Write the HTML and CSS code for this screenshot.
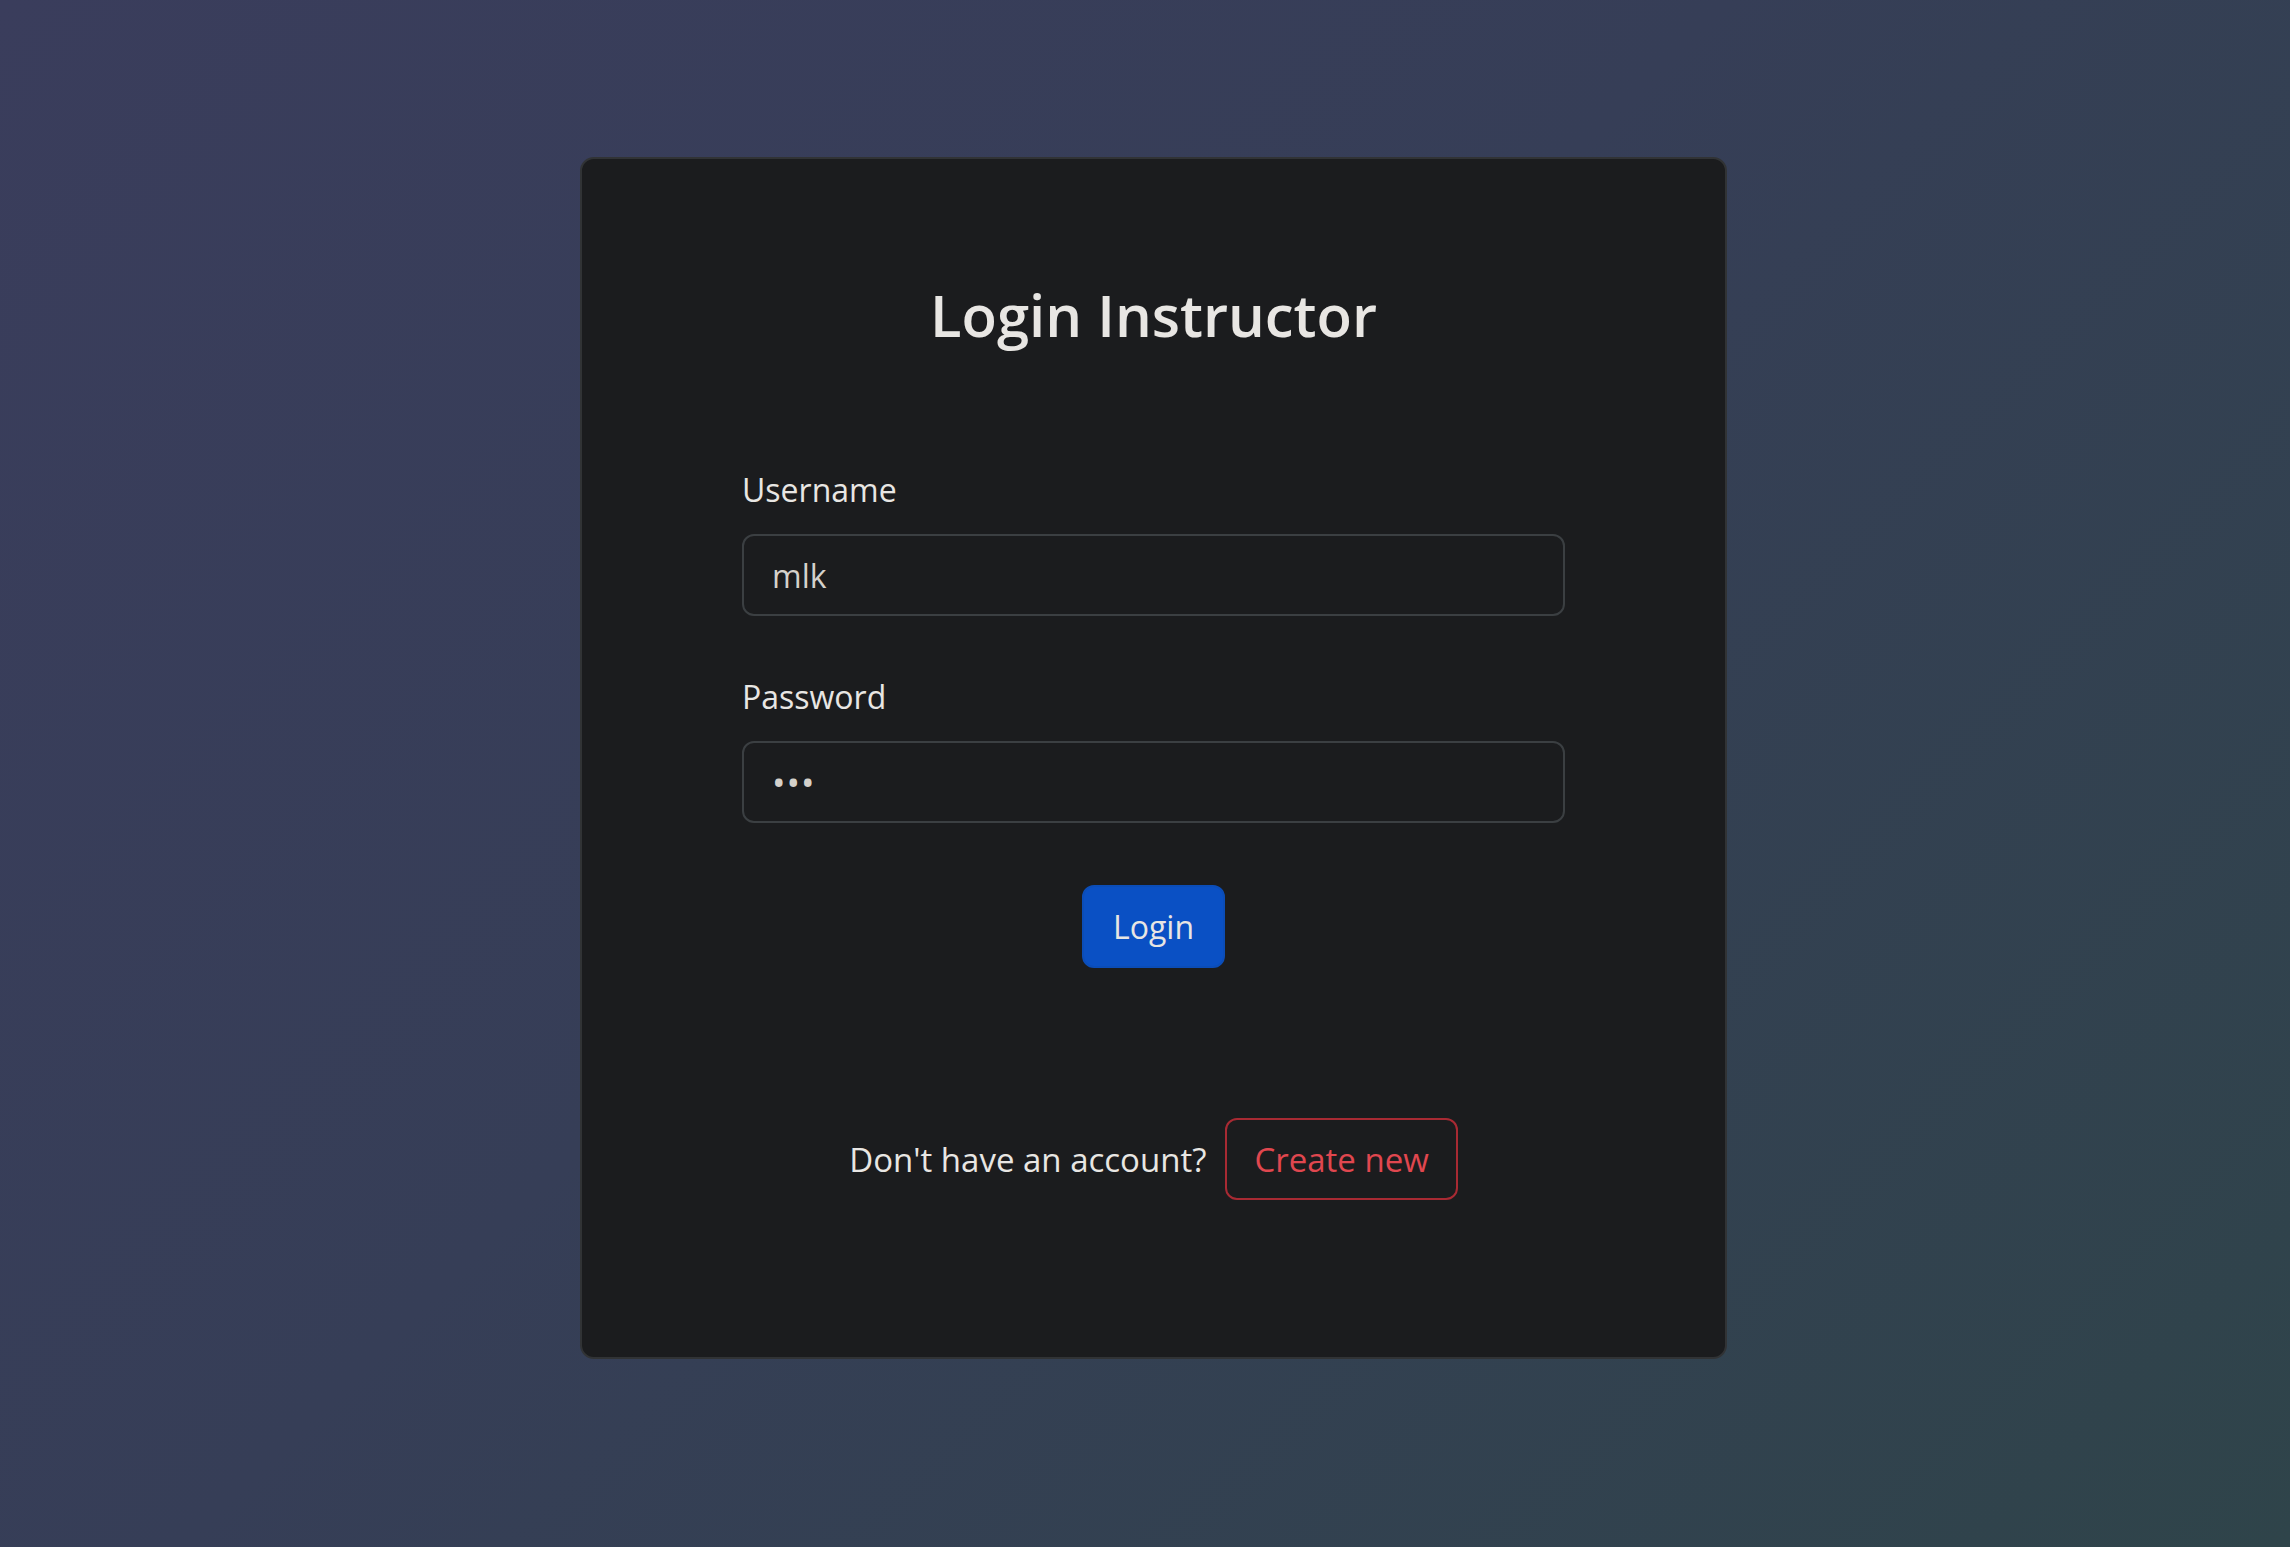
FILE: index.html
```html
<!DOCTYPE html>
<html lang="en">
<head>
<meta charset="utf-8">
<title>Login Instructor</title>
<link rel="stylesheet" href="styles.css">
</head>
<body>
<main class="page">
  <section class="card">
    <h1 class="title">Login Instructor</h1>
    <form class="form">
      <label class="label" for="username">Username</label>
      <input class="field" id="username" type="text" value="mlk">
      <label class="label label-second" for="password">Password</label>
      <input class="field field-password" id="password" type="password" value="abc">
      <div class="actions">
        <button class="btn btn-primary" type="button">Login</button>
      </div>
    </form>
    <div class="signup">
      <span class="signup-text">Don't have an account?</span>
      <button class="btn btn-outline" type="button">Create new</button>
    </div>
  </section>
</main>
</body>
</html>
```

FILE: styles.css
```css
* { box-sizing: border-box; }
html, body { margin: 0; padding: 0; }
body {
  width: 2290px;
  height: 1547px;
  overflow: hidden;
  background: linear-gradient(135deg, #3a3d5c 0%, #363e57 45%, #2f444a 100%);
  font-family: "Open Sans", "Noto Sans", sans-serif;
  color: #e8e6e3;
}
.page {
  padding-top: 157px;
  padding-left: 580px;
}
.card {
  width: 1147px;
  height: 1202px;
  background: #1b1c1e;
  border: 2px solid #313335;
  border-radius: 14px;
  padding: 121px 160px 0;
  display: flex;
  flex-direction: column;
}
.title {
  margin: 0;
  text-align: center;
  font-size: 58px;
  line-height: 70px;
  font-weight: 600;
  color: #e8e6e3;
}
.form {
  display: flex;
  flex-direction: column;
  margin-top: 120px;
}
.label {
  font-size: 32px;
  line-height: 40px;
  color: #e8e6e3;
  margin-bottom: 24px;
}
.label-second { margin-top: 61px; }
.field {
  height: 82px;
  width: 100%;
  background: #1b1c1e;
  border: 2px solid #3b3f42;
  border-radius: 12px;
  padding: 0 28px;
  font-family: inherit;
  font-size: 32px;
  color: #d5d1cb;
  outline: none;
}
.field-password {
  font-size: 36px;
  letter-spacing: 1px;
}
.actions {
  display: flex;
  justify-content: center;
  margin-top: 62px;
}
.btn {
  font-family: inherit;
  font-size: 32px;
  height: 83px;
  border-radius: 12px;
  cursor: pointer;
}
.btn-primary {
  background: #0a50c4;
  border: 2px solid #0b4db8;
  color: #e8e6e3;
  padding: 0 29px;
}
.signup {
  display: flex;
  justify-content: center;
  align-items: center;
  gap: 19px;
  margin-top: 150px;
}
.signup-text {
  font-size: 33px;
  color: #e8e6e3;
}
.btn-outline {
  background: transparent;
  border: 2px solid #a82a33;
  color: #e0474f;
  font-size: 33px;
  padding: 0 27px;
  height: 82px;
}
```
